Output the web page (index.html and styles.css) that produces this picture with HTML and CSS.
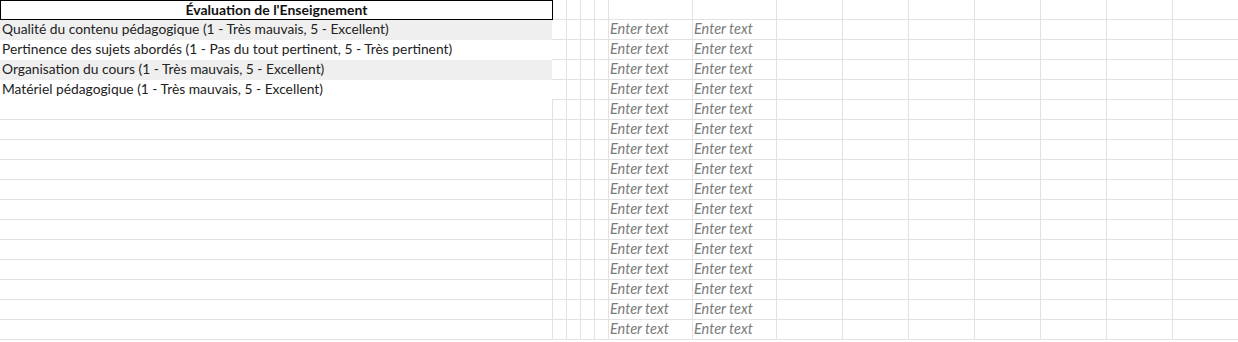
FILE: index.html
```html
<!DOCTYPE html>
<html lang="fr">
<head>
<meta charset="utf-8">
<title>Évaluation de l'Enseignement</title>
<link rel="stylesheet" href="styles.css">
</head>
<body>
<div class="sheet">
  <div class="row">
    <div class="cell a head">Évaluation de l'Enseignement</div>
    <div class="cell nb"></div><div class="cell"></div><div class="cell"></div><div class="cell"></div>
    <div class="cell"></div><div class="cell"></div>
    <div class="cell"></div><div class="cell"></div><div class="cell"></div><div class="cell"></div><div class="cell"></div><div class="cell"></div><div class="cell"></div>
  </div>
  <div class="row">
    <div class="cell a shade">Qualité du contenu pédagogique (1 - Très mauvais, 5 - Excellent)</div>
    <div class="cell nb"></div><div class="cell"></div><div class="cell"></div><div class="cell"></div>
    <div class="cell ph">Enter text</div><div class="cell ph">Enter text</div>
    <div class="cell"></div><div class="cell"></div><div class="cell"></div><div class="cell"></div><div class="cell"></div><div class="cell"></div><div class="cell"></div>
  </div>
  <div class="row">
    <div class="cell a">Pertinence des sujets abordés (1 - Pas du tout pertinent, 5 - Très pertinent)</div>
    <div class="cell nb"></div><div class="cell"></div><div class="cell"></div><div class="cell"></div>
    <div class="cell ph">Enter text</div><div class="cell ph">Enter text</div>
    <div class="cell"></div><div class="cell"></div><div class="cell"></div><div class="cell"></div><div class="cell"></div><div class="cell"></div><div class="cell"></div>
  </div>
  <div class="row">
    <div class="cell a shade">Organisation du cours (1 - Très mauvais, 5 - Excellent)</div>
    <div class="cell nb"></div><div class="cell"></div><div class="cell"></div><div class="cell"></div>
    <div class="cell ph">Enter text</div><div class="cell ph">Enter text</div>
    <div class="cell"></div><div class="cell"></div><div class="cell"></div><div class="cell"></div><div class="cell"></div><div class="cell"></div><div class="cell"></div>
  </div>
  <div class="row">
    <div class="cell a">Matériel pédagogique (1 - Très mauvais, 5 - Excellent)</div>
    <div class="cell nb"></div><div class="cell"></div><div class="cell"></div><div class="cell"></div>
    <div class="cell ph">Enter text</div><div class="cell ph">Enter text</div>
    <div class="cell"></div><div class="cell"></div><div class="cell"></div><div class="cell"></div><div class="cell"></div><div class="cell"></div><div class="cell"></div>
  </div>
  <div class="row">
    <div class="cell a ruled"></div>
    <div class="cell"></div><div class="cell"></div><div class="cell"></div><div class="cell"></div>
    <div class="cell ph">Enter text</div><div class="cell ph">Enter text</div>
    <div class="cell"></div><div class="cell"></div><div class="cell"></div><div class="cell"></div><div class="cell"></div><div class="cell"></div><div class="cell"></div>
  </div>
  <div class="row">
    <div class="cell a ruled"></div>
    <div class="cell"></div><div class="cell"></div><div class="cell"></div><div class="cell"></div>
    <div class="cell ph">Enter text</div><div class="cell ph">Enter text</div>
    <div class="cell"></div><div class="cell"></div><div class="cell"></div><div class="cell"></div><div class="cell"></div><div class="cell"></div><div class="cell"></div>
  </div>
  <div class="row">
    <div class="cell a ruled"></div>
    <div class="cell"></div><div class="cell"></div><div class="cell"></div><div class="cell"></div>
    <div class="cell ph">Enter text</div><div class="cell ph">Enter text</div>
    <div class="cell"></div><div class="cell"></div><div class="cell"></div><div class="cell"></div><div class="cell"></div><div class="cell"></div><div class="cell"></div>
  </div>
  <div class="row">
    <div class="cell a ruled"></div>
    <div class="cell"></div><div class="cell"></div><div class="cell"></div><div class="cell"></div>
    <div class="cell ph">Enter text</div><div class="cell ph">Enter text</div>
    <div class="cell"></div><div class="cell"></div><div class="cell"></div><div class="cell"></div><div class="cell"></div><div class="cell"></div><div class="cell"></div>
  </div>
  <div class="row">
    <div class="cell a ruled"></div>
    <div class="cell"></div><div class="cell"></div><div class="cell"></div><div class="cell"></div>
    <div class="cell ph">Enter text</div><div class="cell ph">Enter text</div>
    <div class="cell"></div><div class="cell"></div><div class="cell"></div><div class="cell"></div><div class="cell"></div><div class="cell"></div><div class="cell"></div>
  </div>
  <div class="row">
    <div class="cell a ruled"></div>
    <div class="cell"></div><div class="cell"></div><div class="cell"></div><div class="cell"></div>
    <div class="cell ph">Enter text</div><div class="cell ph">Enter text</div>
    <div class="cell"></div><div class="cell"></div><div class="cell"></div><div class="cell"></div><div class="cell"></div><div class="cell"></div><div class="cell"></div>
  </div>
  <div class="row">
    <div class="cell a ruled"></div>
    <div class="cell"></div><div class="cell"></div><div class="cell"></div><div class="cell"></div>
    <div class="cell ph">Enter text</div><div class="cell ph">Enter text</div>
    <div class="cell"></div><div class="cell"></div><div class="cell"></div><div class="cell"></div><div class="cell"></div><div class="cell"></div><div class="cell"></div>
  </div>
  <div class="row">
    <div class="cell a ruled"></div>
    <div class="cell"></div><div class="cell"></div><div class="cell"></div><div class="cell"></div>
    <div class="cell ph">Enter text</div><div class="cell ph">Enter text</div>
    <div class="cell"></div><div class="cell"></div><div class="cell"></div><div class="cell"></div><div class="cell"></div><div class="cell"></div><div class="cell"></div>
  </div>
  <div class="row">
    <div class="cell a ruled"></div>
    <div class="cell"></div><div class="cell"></div><div class="cell"></div><div class="cell"></div>
    <div class="cell ph">Enter text</div><div class="cell ph">Enter text</div>
    <div class="cell"></div><div class="cell"></div><div class="cell"></div><div class="cell"></div><div class="cell"></div><div class="cell"></div><div class="cell"></div>
  </div>
  <div class="row">
    <div class="cell a ruled"></div>
    <div class="cell"></div><div class="cell"></div><div class="cell"></div><div class="cell"></div>
    <div class="cell ph">Enter text</div><div class="cell ph">Enter text</div>
    <div class="cell"></div><div class="cell"></div><div class="cell"></div><div class="cell"></div><div class="cell"></div><div class="cell"></div><div class="cell"></div>
  </div>
  <div class="row">
    <div class="cell a ruled"></div>
    <div class="cell"></div><div class="cell"></div><div class="cell"></div><div class="cell"></div>
    <div class="cell ph">Enter text</div><div class="cell ph">Enter text</div>
    <div class="cell"></div><div class="cell"></div><div class="cell"></div><div class="cell"></div><div class="cell"></div><div class="cell"></div><div class="cell"></div>
  </div>
  <div class="row">
    <div class="cell a ruled"></div>
    <div class="cell"></div><div class="cell"></div><div class="cell"></div><div class="cell"></div>
    <div class="cell ph">Enter text</div><div class="cell ph">Enter text</div>
    <div class="cell"></div><div class="cell"></div><div class="cell"></div><div class="cell"></div><div class="cell"></div><div class="cell"></div><div class="cell"></div>
  </div>
</div>
</body>
</html>
```
FILE: styles.css
```css
html, body {
  margin: 0;
  padding: 0;
  background: #ffffff;
  overflow: hidden;
}

body {
  font-family: Lato, "Open Sans", sans-serif;
  font-size: 13.8px;
  color: #222222;
}

.sheet {
  width: 1238px;
}

.row {
  display: grid;
  grid-template-columns: 552px 14px 14px 14px 14px 84px 84px repeat(7, 66px);
  height: 20px;
}

.cell {
  box-sizing: border-box;
  height: 20px;
  border-left: 1px solid #e2e2e2;
  border-bottom: 1px solid #e2e2e2;
  white-space: nowrap;
  overflow: hidden;
  line-height: 17px;
}

.cell.nb {
  border-left: none;
}

.cell.a {
  border-left: none;
  border-bottom: none;
  padding-left: 2px;
  line-height: 17px;
}

.cell.a.ruled {
  border-bottom: 1px solid #e2e2e2;
}

.cell.a.shade {
  background: #efefef;
}

.cell.a.head {
  position: relative;
  z-index: 1;
  margin-right: -1px;
  border: 1px solid #000000;
  padding-left: 0;
  text-align: center;
  font-size: 14px;
  font-weight: 700;
  line-height: 17px;
  color: #111111;
}

.cell.ph {
  padding-left: 1px;
  font-size: 14.5px;
  font-style: italic;
  color: #7a7a7a;
}
```
